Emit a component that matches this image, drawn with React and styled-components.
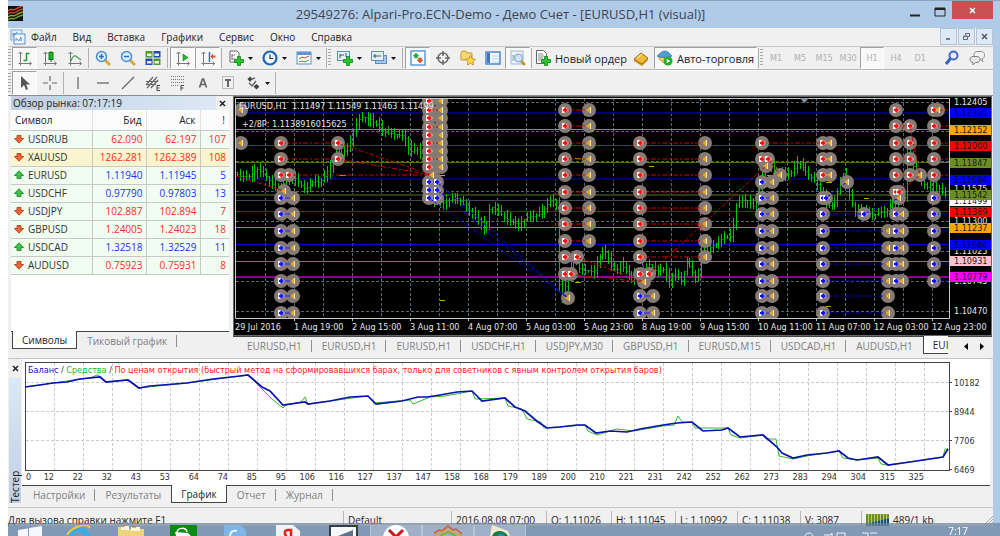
import React from 'react';
import styled, { createGlobalStyle, css } from 'styled-components';

const GlobalStyle = createGlobalStyle`
    * {
        box-sizing: border-box;
    }
    body {
        margin: 0;
        background: #fff;
        font-family: 'Open Sans', 'Noto Sans', sans-serif;
        font-size: 10px;
        color: #222;
        overflow: hidden;
    }
    button {
        font: inherit;
        color: inherit;
        background: none;
        border: 0;
        padding: 0;
        margin: 0;
    }
`

const Window = styled.div`
    margin-left: 8px;
    background: #b0cbe8;
`
const TitleBar = styled.header`
    display: flex;
    height: 28px;
    border-top: 1px solid #8ba3bd;
`
const Logo = styled.svg`
    width: 15px;
    height: 15px;
    margin-top: 5px;
`
const Title = styled.h1`
    flex: 1;
    margin: 0;
    padding-left: 76px;
    text-align: center;
    font-size: 13px;
    line-height: 27px;
    font-weight: 400;
    color: #3c4450;
`
const WindowButtons = styled.div`
    display: flex;
    padding-right: 7px;
    align-items: flex-start;
`
const WindowButton = styled.button`
    width: ${(props) => (props.$close ? '41px' : '25px')};
    height: 18px;
    background: ${(props) => (props.$close ? '#c75050' : 'transparent')};
    svg {
        display: block;
        margin: 0 auto;
    }
`
const Body = styled.div`
    margin-right: 7px;
    background: #f0f0f0;
`
const MenuBar = styled.nav`
    display: flex;
    height: 18px;
    align-items: center;
    padding-left: 2px;
    > svg {
        margin-right: 5px;
    }
`
const MenuItem = styled.button`
    margin-right: 16px;
    font-size: 10px;
    line-height: 18px;
`
const MdiButtons = styled.div`
    display: flex;
    gap: 1px;
    margin-left: auto;
    align-self: flex-start;
`
const MdiButton = styled.button`
    width: 17px;
    height: 17px;
    border: 1px solid #b4c4d6;
    background: #dde9f7;
    svg {
        display: block;
        margin: 0 auto;
    }
`
const Toolbar = styled.div`
    display: flex;
    height: ${(props) => (props.$last ? '26px' : '24px')};
    align-items: stretch;
    padding-right: 4px;
    border-top: 1px solid ${(props) => (props.$last ? '#fbfbfb' : '#c8c8c8')};
    border-bottom: 1px solid ${(props) => (props.$last ? '#8e8e8e' : '#b4b4b4')};
`
const Grip = styled.span`
    width: 3px;
    margin: 2px 1px 2px 0;
    background: repeating-linear-gradient(#a8a8a8 0 1px, #f0f0f0 1px 3px);
`
const Divider = styled.span`
    width: 1px;
    margin: 1px ${(props) => (props.$wide ? '2px' : '1px')};
    background: #b0b0b0;
`
const Tool = styled.button`
    display: flex;
    align-items: center;
    justify-content: center;
    gap: 4px;
    width: ${(props) => (props.$menu ? '34px' : props.$label ? 'auto' : '25px')};
    padding: ${(props) => (props.$label ? '0 2px' : '0')};
    font-size: 11px;
    white-space: nowrap;
    ${(props) => props.$on && css`
        background: #f8f8f8;
        border: 1px solid;
        border-color: #a0a0a0 #fff #fff #a0a0a0;
    `}
`
const Period = styled(Tool)`
    width: 24px;
    font: 9px 'DejaVu Sans Condensed', 'DejaVu Sans', sans-serif;
    color: #b0b0b0;
`
const Push = styled.span`
    flex: 1;
`
const Workspace = styled.main`
    display: grid;
    grid-template-columns: 218px minmax(0, 1fr);
    column-gap: 4px;
    padding: 0 1px 0 3px;
`
const Panel = styled.section`
    display: flex;
    flex-direction: column;
    background: #fff;
`
const PanelTitle = styled.h2`
    display: flex;
    justify-content: space-between;
    margin: 0;
    padding: 1px 3px 0 2px;
    height: 14px;
    font-size: 10px;
    line-height: 13px;
    font-weight: 400;
    background: linear-gradient(90deg, #bfd0e2, #dce8f5 94%, #f0f0f0 94%);
`
const Quotes = styled.table`
    width: 100%;
    border-collapse: collapse;
    table-layout: fixed;
    font-size: 10px;
    line-height: 16px;
    th {
        height: 20px;
        padding: 0 4px;
        font-weight: 400;
        text-align: right;
        border-right: 1px solid #e0e5ea;
        border-bottom: 1px solid #c8c8c8;
        background: #fcfcfc;
    }
    th:first-child {
        text-align: left;
    }
    td {
        height: 18px;
        padding: 0 3px;
        text-align: right;
        border-right: 1px solid #c8c8c8;
        border-bottom: 1px solid #c8c8c8;
    }
    td:last-child, th:last-child {
        border-right: 0;
    }
`
const QuoteRow = styled.tr`
    background: ${(props) => (props.$marked ? '#faf5cf' : '#f0fdf0')};
    color: ${(props) => (props.$up ? '#2330f0' : '#fa2c24')};
`
const Ticker = styled.div`
    display: flex;
    align-items: center;
    gap: 4px;
    color: #333;
`
const TabStrip = styled.div`
    display: flex;
    align-items: flex-start;
    height: ${(props) => (props.$bottom ? '23px' : '18px')};
    margin-top: ${(props) => (props.$bottom ? 'auto' : '0')};
    padding-left: ${(props) => props.$indent || '0'};
    background: #f0f0f0;
    border-top: 1px solid #444;
`
const Tab = styled.button`
    flex: none;
    height: 17px;
    padding: 0 ${(props) => (props.$active ? '9px' : '10px')};
    line-height: 16px;
    font-size: 10px;
    color: ${(props) => (props.$active ? '#222' : '#808080')};
    background: ${(props) => (props.$active ? '#fff' : 'none')};
    border: solid #444;
    border-width: ${(props) => (props.$active ? '0 1px 1px 1px' : '0')};
    ${(props) => props.$active && css`
        height: 18px;
        margin-top: -1px;
    `}
    ${(props) => props.$rule && css`
        background: linear-gradient(#909090, #909090) right center / 1px 12px no-repeat;
    `}
    ${(props) => props.$cut && css`
        padding-right: 0;
        border-right: 0;
    `}
`
const Scroller = styled.div`
    display: flex;
    flex: 1;
    max-width: 34px;
    height: 17px;
    padding-right: 2px;
    margin-left: auto;
    align-items: center;
    justify-content: space-around;
    background: #f0f0f0;
`
const ChartColumn = styled.section`
    min-width: 0;
    svg.plot {
        display: block;
        width: 100%;
        height: auto;
        background: #000;
    }
`
const Tester = styled.section`
    display: grid;
    grid-template-columns: 14px minmax(0, 1fr);
    margin-top: 4px;
    padding-right: 3px;
    border-top: 1px solid #c4c4c4;
    svg.plot {
        display: block;
        width: 100%;
        height: auto;
        background: #fff;
    }
`
const TesterRail = styled.div`
    display: flex;
    flex-direction: column;
    align-items: center;
    justify-content: space-between;
    padding-top: 3px;
    font-size: 10px;
    line-height: 12px;
    span {
        flex: 1;
        width: 12px;
        margin-top: 4px;
        writing-mode: vertical-rl;
        transform: rotate(180deg);
        background: linear-gradient(#bfd0e2, #dce8f5);
    }
`
const StatusBar = styled.footer`
    display: flex;
    height: 29px;
    margin-top: 4px;
    padding-top: 3px;
    border-top: 1px solid #c4c4c4;
    line-height: 18px;
    font-size: 10px;
    white-space: nowrap;
`
const StatusCell = styled.span`
    width: ${(props) => props.$w || 'auto'};
    display: flex;
    align-items: center;
    gap: 4px;
    height: 18px;
    padding-left: ${(props) => (props.$first ? '0' : '4px')};
    border-left: ${(props) => (props.$first ? '0' : '1px solid #b8b8b8')};
    flex: ${(props) => (props.$first ? '1' : 'none')};
    > svg:last-child {
        margin-left: auto;
    }
`
const Taskbar = styled.div`
    position: fixed;
    left: 8px;
    right: 0;
    bottom: 0;
    height: 13px;
    display: flex;
    align-items: flex-end;
    background: linear-gradient(rgba(110, 132, 155, 0.72) 0 3px, #8299b6 3px);
    svg {
        display: block;
    }
`
const TaskButton = styled.button`
    width: ${(props) => props.$w};
    height: 11px;
    display: flex;
    justify-content: center;
    ${(props) => props.$open && css`
        background: rgba(190, 205, 220, 0.45);
        border-left: 1px solid #b6c5d5;
        border-right: 1px solid #b6c5d5;
    `}
`
const Tray = styled.div`
    display: flex;
    align-items: flex-end;
    margin-left: auto;
    padding-right: 32px;
    gap: 70px;
    color: #fff;
    font-size: 10px;
    line-height: 10px;
`

/* ---------- toolbar icons ---------- */

const Icon = ({ children, size = 16 }) => (
    <svg width={size} height={size} viewBox="0 0 16 16" fill="none" aria-hidden="true">{children}</svg>
)
const Axes = () => <path d="M3.500 2v11.500H14M1.500 4l2-2 2 2M12.500 11.500l2 2-2 2M1.500 13.500h2v2" stroke="#777" />
const Caret = () => (
    <svg width="5" height="3" viewBox="0 0 5 3" aria-hidden="true"><path d="M0 0h5L2.500 3z" fill="#111" /></svg>
)
const Plus = () => (
    <path d="M9.500 6.500h3v3h3v3h-3v3h-3v-3h-3v-3h3z" fill="#27c927" stroke="#0b7d12" strokeWidth=".8" />
)
const Cross = ({ color = '#222' }) => (
    <svg width="7" height="7" viewBox="0 0 7 7" aria-hidden="true">
        <path d="M1 1l5 5M6 1L1 6" stroke={color} strokeWidth="1.500" />
    </svg>
)

const icons = {
    bars: <><Axes /><path d="M9.500 3v8M9.500 3.500h3M6.500 10.500h3" stroke="#1d9a2a" strokeWidth="1.500" /></>,
    candles: <><Axes /><path d="M9 1v11" stroke="#0a7a14" /><rect x="7" y="2.500" width="4" height="7" fill="#22b52e" stroke="#0a7a14" /></>,
    line: <><Axes /><path d="M4 11c2-6 4-6 6-4l4 3" stroke="#4c9a55" strokeWidth="1.200" /></>,
    zoomIn: <><path d="M10 10l5 5" stroke="#d9a93a" strokeWidth="3" /><circle cx="6.500" cy="6.500" r="5" fill="#d9efff" stroke="#4b8ed0" strokeWidth="1.500" /><path d="M4 6.500h5M6.500 4v5" stroke="#2a6fb8" strokeWidth="1.500" /></>,
    zoomOut: <><path d="M10 10l5 5" stroke="#d9a93a" strokeWidth="3" /><circle cx="6.500" cy="6.500" r="5" fill="#d9efff" stroke="#4b8ed0" strokeWidth="1.500" /><path d="M4 6.500h5" stroke="#2a6fb8" strokeWidth="1.500" /></>,
    tiles: <><path d="M.5 1h7v6.500h-7zM8.500 8.500h7V15h-7z" fill="#4c9e22" /><path d="M8.500 1h7v6.500h-7zM.5 8.500h7V15h-7z" fill="#2448c0" /><path d="M2 3.500h4.500V6H2zM9.500 3.500H14V6H9.500zM2 11h4.500v2.500H2zM9.500 11H14v2.500H9.500z" fill="#e8f1e4" /></>,
    scroll: <><Axes /><path d="M8 4l5 3.500L8 11z" fill="#25b637" stroke="#10801c" strokeWidth=".6" /></>,
    shift: <><Axes /><path d="M9.500 2v10" stroke="#3c6d9e" strokeWidth="1.500" /><path d="M10.500 6.500l2.500-3v2h2.500v2H13v2z" fill="#d8542a" /></>,
    newChart: <><path d="M2 1h7l2 2v9H2z" fill="#fff" stroke="#666" /><path d="M4 4v6M4 5h3M4 9h3" stroke="#777" /><Plus /></>,
    clock: <><circle cx="8" cy="8" r="6.500" fill="#eef6ff" stroke="#1d65b5" strokeWidth="2.200" /><path d="M8 4.500V8.500h3" stroke="#333" strokeWidth="1.200" /></>,
    template: <><rect x="1" y="2" width="14" height="12" fill="#fff" stroke="#5b8fca" /><path d="M1 2h14v3H1z" fill="#5c94d6" /><path d="M3 9l3-2 3 1 4-2" stroke="#c2422a" /><path d="M3 12l3-1 3 1 4-2" stroke="#35a13c" /></>,
    addPane: <><rect x=".5" y="1.500" width="12" height="9" fill="#e5f0fc" stroke="#5b8fca" /><path d="M3 4v4M3 5h4M9 3v4" stroke="#456" /><Plus /></>,
    panes: <><rect x="4.500" y="5.500" width="11" height="8" fill="#a9c6ea" stroke="#5b8fca" /><rect x=".5" y="1.500" width="12" height="9" fill="#e5f0fc" stroke="#5b8fca" /><path d="M2 6h8M4 4v4" stroke="#456" /></>,
    market: <><rect x="1" y="1" width="14" height="14" fill="#fff" stroke="#5b9bd8" strokeWidth="1.500" /><path d="M6 3l3 3H7.500v2h-3V6H3z" fill="#2fac35" stroke="#2fac35" strokeWidth=".6" /><path d="M10 13l-3-3h1.500V8h3v2H13z" fill="#e2532b" stroke="#e2532b" strokeWidth=".6" /></>,
    target: <><circle cx="8" cy="8" r="5" stroke="#666" strokeWidth="1.500" /><path d="M8 1v5M8 10v5M1 8h5M10 8h5" stroke="#666" strokeWidth="1.500" /></>,
    favorites: <><path d="M1 3l1-2h4l1 2h5v7H1z" fill="#f6d878" stroke="#c79a2c" /><path d="M10.500 5.500l1.500 3.200 3.500.5-2.500 2.300.6 3.500-3.100-1.700-3.100 1.700.6-3.500-2.500-2.300 3.500-.5z" fill="#ffd94d" stroke="#b98614" strokeWidth=".8" /></>,
    data: <><rect x="1" y="2" width="14" height="12" fill="#f2f7fd" stroke="#4c86c9" strokeWidth="1.500" /><path d="M2 3h3v10H2z" fill="#3f78bf" /><path d="M7 6h7M7 9h7M7 12h7" stroke="#c2d4ea" /></>,
    tester: <><rect x="1" y="1" width="12" height="13" fill="#eaf2fb" stroke="#9db6d2" /><path d="M3 11V5l3 3 2-4" stroke="#8aa" /><path d="M11 11l4 4" stroke="#c69522" strokeWidth="2.500" /><circle cx="8.500" cy="8" r="4" fill="#cfe2f5" stroke="#7ba0c8" /></>,
    order: <><path d="M1.500.5h7l3 3v10h-10z" fill="#fff" stroke="#666" /><path d="M3 4h5M3 6h6M3 8h5M3 10h3" stroke="#888" /><Plus /></>,
    book: <><path d="M1 9l7-6 7 5-6 6z" fill="#f0bc3c" stroke="#9d6a13" /><path d="M1 9v2l8 5 6-6V8l-6 6z" fill="#c98a1c" /><path d="M4 8l5-4" stroke="#fff0b5" /></>,
    auto: <><path d="M2 9c0-7 12-7 12 0l-6 5z" fill="#f4cf4e" stroke="#b48c1e" strokeWidth=".7" /><path d="M0 6c2 2 12 2 15 0-2-1-3-5-7-5S3 4 0 6z" fill="#4f9fd0" stroke="#2d74a8" strokeWidth=".7" /><circle cx="11" cy="11" r="4.500" fill="#1faf2d" /><path d="M9.700 8.800l3.600 2.200-3.600 2.200z" fill="#fff" /></>,
    search: <><path d="M6.500 8.500L2 14" stroke="#3c5fc0" strokeWidth="3" /><circle cx="9.500" cy="5.500" r="4" fill="#e6eefc" stroke="#4468c8" strokeWidth="2" /></>,
    chat: <><path d="M8 1.500h4.500c4 0 4 7 .5 7l1 3-4-3H8c-4 0-4-7 0-7z" fill="#f2f2f2" stroke="#8c8c8c" /><path d="M4 6.500h4c4 0 4 6 0 6H6.500L4 15v-2.500c-4 0-4-6 0-6z" fill="#e6e6e6" stroke="#808080" /></>,
    cursor: <path d="M4 1v12l3-3 2 5 2-1-2-4.500h4z" fill="#555" />,
    crosshair: <path d="M8 1v5M8 10v5M1 8h5M10 8h5" stroke="#666" strokeWidth="1.200" />,
    vline: <path d="M8 2v12" stroke="#666" strokeWidth="1.300" />,
    hline: <path d="M2 8h12" stroke="#666" strokeWidth="1.300" />,
    trend: <path d="M2 14L14 2" stroke="#666" strokeWidth="1.200" />,
    channel: <><path d="M1 10L8 2M2 13L12 2M6 13l7-8M1 6.500h12M1 9.500h10" stroke="#666" strokeWidth="1.200" /><path d="M15 10.500h-3v5h3M12 13h2.500" stroke="#444" /></>,
    fibo: <><path d="M1 1.500h14M1 4.500h14M1 7.500h14M1 10.500h8" stroke="#777" strokeDasharray="1 1" /><path d="M14 10.500h-3v5M11 13h2.500" stroke="#444" /></>,
    text: <path d="M4.500 12.500L7.500 4h1l3 8.500M6 9.500h4" stroke="#666" strokeWidth="1.700" />,
    label: <><rect x="2.500" y="1.500" width="11" height="12" stroke="#888" strokeDasharray="1 1" /><path d="M5 5h6M8 5v7" stroke="#666" strokeWidth="2" /></>,
    arrows: <><path d="M5 1.500l2.500 2.500-2.500 3-2.500-3zM11.500 9l3 2.500-3 3-3-3z" fill="#444" /><path d="M4 8l3 3 4-5M7 4l3-1" stroke="#666" strokeWidth="1.500" /></>,
}

const Btn = ({ icon, label, on, menu, text }) => (
    <Tool type="button" aria-label={text ? undefined : label} aria-pressed={on} $on={on} $menu={menu} $label={!!text}>
        <Icon>{icons[icon]}</Icon>
        {text}
        {menu && <Caret />}
    </Tool>
)

/* ---------- market watch ---------- */

const quotes = [
    ['USDRUB', '62.090', '62.197', '107', false],
    ['XAUUSD', '1262.281', '1262.389', '108', false],
    ['EURUSD', '1.11940', '1.11945', '5', true],
    ['USDCHF', '0.97790', '0.97803', '13', true],
    ['USDJPY', '102.887', '102.894', '7', false],
    ['GBPUSD', '1.24005', '1.24023', '18', false],
    ['USDCAD', '1.32518', '1.32529', '11', true],
    ['AUDUSD', '0.75923', '0.75931', '8', false],
]

const Arrow = ({ up }) => (
    <svg width="10" height="10" viewBox="0 0 10 10" aria-hidden="true">
        <path
            d={up ? 'M5 .8l4.600 4.700H7v3H3v-3H.4z' : 'M5 9.200L.4 4.500H3v-3h4v3h2.600z'}
            fill={up ? '#3cc44a' : '#f0653a'}
            stroke={up ? '#157a20' : '#a8320f'}
            strokeWidth=".8"
        />
    </svg>
)

/* ---------- price chart ---------- */

const levels = [
    [17, '#00007c', 2], [33, '#c98200', 1], [49, '#c40000', 1], [66, '#566f1c', 1], [83, '#00006a', 2],
    [99, '#2b3a10', 2], [104, '#454a58', 1], [115, '#a80000', 1], [131, '#c98200', 1], [148, '#0000d0', 1],
    [165, '#8d7077', 1], [181, '#8c008c', 2],
]

const prices = [
    [6, '1.12405'], [93, '1.11575'], [125, '1.11300'], [155, '1.11025'], [185, '1.10745'], [215, '1.10470'],
    [17, '1.12305', '#0000ff', '#00003c'], [34, '1.12152', '#ffa500'], [50, '1.12000', '#ff0000'],
    [67, '1.11847', '#6b8e23'], [84, '1.11694', '#0000ff', '#00003c'], [105, '1.11499', '#ffffff'],
    [99, '1.11542', '#6b8e23'], [116, '1.11389', '#ff0000'], [132, '1.11237', '#ffa500'],
    [149, '1.11084', '#0000ff', '#00003c'], [165, '1.10931', '#ffc0cb'], [181, '1.10779', '#ff00ff'],
]

const times = [
    '1 Aug 19:00', '2 Aug 15:00', '3 Aug 11:00', '4 Aug 07:00', '5 Aug 03:00', '5 Aug 23:00', '8 Aug 19:00',
    '9 Aug 15:00', '10 Aug 11:00', '11 Aug 07:00', '12 Aug 03:00', '12 Aug 23:00',
]

// mid price, one knot for each turn of the market
const knots = [
    [3, 75], [10, 80], [19, 80], [27, 73], [37, 80], [47, 95], [55, 85], [60, 78], [67, 83], [75, 93], [84, 85],
    [90, 86], [97, 76], [104, 61], [109, 48], [114, 55], [119, 53], [122, 38], [129, 23], [134, 20], [140, 23],
    [147, 28], [155, 36], [167, 38], [175, 40], [180, 55], [189, 53], [192, 61], [199, 78], [204, 106], [214, 106],
    [227, 101], [237, 111], [245, 121], [251, 125], [256, 134], [260, 110], [269, 115], [277, 123], [287, 128],
    [297, 121], [310, 118], [319, 106], [326, 101], [328, 120], [330, 211], [334, 195], [339, 178], [344, 163],
    [350, 173], [364, 175], [370, 160], [377, 155], [380, 168], [387, 175], [390, 165], [397, 176], [404, 181],
    [410, 181], [419, 168], [427, 175], [434, 173], [439, 185], [444, 176], [452, 185], [457, 165], [465, 181],
    [470, 178], [472, 141], [480, 151], [485, 148], [494, 141], [501, 140], [503, 135], [505, 111], [510, 105],
    [517, 103], [524, 111], [529, 95], [534, 70], [540, 65], [545, 81], [552, 76], [560, 78], [569, 65],
    [575, 75], [584, 83], [592, 95], [597, 111], [605, 106], [610, 88], [614, 75], [620, 101], [625, 115],
    [634, 115], [644, 118], [657, 115], [664, 105], [675, 101], [678, 35], [681, 65], [687, 78], [697, 91],
    [704, 86], [710, 93], [715, 98],
]

const midAt = (x) => {
    const i = Math.max(1, knots.findIndex(([kx]) => kx >= x))
    const [x0, y0] = knots[i - 1]
    const [x1, y1] = knots[i]
    return y0 + ((y1 - y0) * (x - x0)) / (x1 - x0)
}

const bars = Array.from({ length: 245 }, (_, i) => {
    const x = Math.round(4 + i * 2.9) + 0.5
    const y = Math.round(midAt(x)) + 0.5
    const next = Math.round(midAt(Math.min(x + 3, 715))) + 0.5
    const up = 1 + ((i * i * 7) % 11) * 0.7
    const down = 1 + ((i * i * 5) % 13) * 0.6
    const top = Math.round(Math.min(y, next) - up)
    const bottom = Math.round(Math.max(y, next) + down)
    return `M${x} ${top}V${bottom}M${x - 1} ${y}h1M${x} ${next}h1`
}).join('')

const sellRows = [14, 30, 47, 63, 79, 96, 112, 128, 145]
const buyRows = [102, 118, 135, 152, 168, 185, 200, 217]
const spread = (kind, x, rows) => rows.map((y) => [kind, x, y])

const markers = [
    ...spread('exit', 8, [14, 47]),
    ...spread('sell', 48, [47, 63, 79]), ['sell', 56, 79], ...spread('sell', 105, [47, 63]), ['exit', 51, 95],
    ...spread('buy', 48, buyRows), ...spread('exit', 60, buyRows),
    ...spread('sell', 196, [5, 14, 22, 31, 39, 47, 55, 63, 71]), ...spread('exit', 208, [5, 14, 22, 31, 39, 47, 55, 63, 71]),
    ['exit', 199, 79], ...spread('buy', 196, [86, 94, 102]), ...spread('buy', 204, [86, 94, 102]),
    ...spread('sell', 332, sellRows), ...spread('exit', 356, sellRows),
    ...spread('sell', 332, [161, 178]), ['sell', 344, 161], ['sell', 338, 178], ['exit', 335, 202],
    ...spread('sell', 407, [47, 63, 79, 96, 112, 128, 145, 161, 178]),
    ...spread('exit', 472, [47, 63, 79, 96, 112, 128, 145, 161]), ['sell', 416, 178], ['exit', 411, 186],
    ...spread('buy', 407, [200, 217]), ...spread('exit', 420, [200, 217]),
    ...spread('sell', 529, [47, 63]), ['sell', 535, 63], ['exit', 533, 70], ['exit', 547, 79],
    ...spread('buy', 529, [86, ...buyRows]), ...spread('exit', 539, [86, ...buyRows]),
    ...spread('sell', 590, [47, 63, 79]), ...spread('exit', 597, [47, 63, 79]),
    ...spread('buy', 590, buyRows), ['buy', 593, 102], ['exit', 614, 86], ['buy', 631, 118],
    ...spread('exit', 655, buyRows.slice(2)), ...spread('buy', 663, buyRows.slice(1, 6)),
    ...spread('exit', 669, buyRows.slice(1, 6)),
    ...spread('sell', 663, [14, 30, 47, 63, 79, 96]), ['sell', 666, 96], ...spread('sell', 677, [30, 47, 63, 79]),
    ['exit', 687, 79], ['exit', 666, 102],
    ...spread('sell', 701, [14, 30, 47, 63, 79]), ['exit', 705, 14], ...spread('buy', 701, buyRows.slice(0, 6)),
]

const rowLines = (x1, x2, rows) => rows.map((y) => `M${x1} ${y}H${x2}`).join('')
const sellLines = rowLines(48, 105, [47, 63]) + rowLines(48, 199, [79]) + rowLines(196, 208, [14, 31, 47, 63])
    + rowLines(332, 356, sellRows) + rowLines(407, 472, [47, 63, 79, 96, 112, 128, 145, 161])
    + rowLines(529, 590, [47]) + rowLines(663, 677, [30, 47, 63, 79]) + rowLines(701, 715, [14, 30, 47, 63, 79])
    + 'M3 80L51 95M105 47L199 79M105 63L199 79M344 161L411 186M332 178L411 186M416 178L533 70M535 63L547 79M677 30L687 79M666 96L687 79'
const buyLines = rowLines(590, 631, [118]) + rowLines(590, 655, [135, 152, 168, 185, 200, 217]) + rowLines(701, 715, buyRows.slice(0, 6))
    + 'M204 86L335 202M204 94L335 202M196 102L335 202M593 102L614 86M631 118L666 102'

const Marker = ({ kind, x, y }) => {
    if (kind === 'exit') {
        return (
            <g>
                <path d={`M${x + 1} ${y - 3}h1v6h-1z`} fill="#f2e7d0" />
                <path d={`M${x + 1} ${y - 3}v6l-4-3z`} fill="#e8a820" />
            </g>
        )
    }
    return (
        <g>
            <path d={`M${x - 3} ${y - 3}h3l4 3-4 3h-3z`} fill="#f4efe9" />
            <path d={`M${x - 2} ${y - 1}h1l1-2 3 3-3 3-1-2h-1z`} fill={kind === 'sell' ? '#ff1010' : '#1010ff'} />
        </g>
    )
}

const PriceChart = () => (
    <svg className="plot" viewBox="0 0 759 240" role="img" aria-label="EURUSD,H1" fontFamily="'DejaVu Sans Condensed', 'DejaVu Sans', sans-serif" fontSize="9">
        <rect x=".5" y=".5" width="758" height="239" fill="none" stroke="#666" />
        <clipPath id="plotArea"><path d="M3 2h713v220H3z" /></clipPath>
        <g clipPath="url(#plotArea)">
            <g stroke="#5a6673" strokeDasharray="3 2">
                {Array.from({ length: 24 }, (_, i) => <path key={i} d={`M${32.5 + i * 29} 2V222`} />)}
                {[6, 35, 65, 95, 125, 155, 185, 215].map((y) => <path key={y} d={`M3 ${y + 0.5}H716`} />)}
            </g>
            {levels.map(([y, color, w]) => <path key={y} d={`M3 ${y + (w === 1 ? 0.5 : 0)}H716`} stroke={color} strokeWidth={w} />)}
            <path d={bars} stroke="#00c400" fill="none" />
            <path d="M106 79.500h7M206 79.500h6M207 204.500h5M342 62.500h6M342 186.500h6M416 70.500h5M416 194.500h5M534 79.500h7M593 86.500h6M631 102.500h5M593 210.500h5" stroke="#b5ae00" />
            {markers.map(([kind, x, y], i) => <circle key={i} cx={x} cy={y} r="7" fill="#857b74" />)}
            <path d={sellLines} stroke="#c80000" strokeDasharray="5 2 2 2" fill="none" />
            <path d={buyLines} stroke="#0000c8" strokeDasharray="5 2 2 2" fill="none" />
            <path d={rowLines(48, 60, buyRows) + rowLines(196, 204, [86, 94, 102]) + rowLines(407, 420, [200, 217]) + rowLines(529, 539, buyRows)} stroke="#2020ff" />
            {markers.map(([kind, x, y], i) => <Marker key={i} kind={kind} x={x} y={y} />)}
        </g>
        <path d="M2.500 2V222.500H716.500V2M2.500 2.500H716" stroke="#c8c8c8" fill="none" />
        <path d="M567 2h9l-4.500 5z" fill="#8292a4" />
        <g fill="#e6e6e6">
            <text x="6" y="13">EURUSD,H1&nbsp; 1.11497 1.11549 1.11463 1.11499</text>
            <text x="9" y="31">+2/8P: 1.1138916015625</text>
            <text x="2" y="234">29 Jul 2016</text>
            {times.map((t, i) => (
                <g key={t}>
                    <path d={`M${61.5 + i * 58} 222v3`} stroke="#c8c8c8" />
                    <text x={61 + i * 58} y="234">{t}</text>
                </g>
            ))}
        </g>
        {prices.map(([y, value, bg, ink]) => (
            <g key={value}>
                {bg && <rect x="717" y={y - 5} width="41" height="10" fill={bg} />}
                <text x="721" y={y + 3} fill={bg ? ink || '#1a1a1a' : '#e6e6e6'}>{value}</text>
            </g>
        ))}
    </svg>
)

const chartTabs = [
    'EURUSD,H1', 'EURUSD,H1', 'EURUSD,H1', 'USDCHF,H1', 'USDJPY,M30', 'GBPUSD,H1', 'EURUSD,M15', 'USDCAD,H1', 'AUDUSD,H1',
]

/* ---------- tester graph ---------- */

const balance = '3,28 18,26 31,24 45,23 58,20 78,18 84,23 106,21 117,29 128,27 165,24 191,20 218,17 226,16 240,28 248,32 261,46 283,43 286,45 308,42 328,38 346,37 354,45 380,42 396,38 405,38 418,36 435,33 450,32 460,42 483,39 493,48 503,52 516,63 525,69 538,68 555,66 563,66 574,74 588,72 605,73 618,70 641,66 655,64 670,63 681,72 700,71 706,69 718,78 741,76 755,88 760,94 771,99 785,96 805,94 817,92 826,99 835,101 856,98 866,106 888,103 921,98 926,90'
const equity = '3,28 31,24 58,20 68,19 75,16 79,18 84,23 106,21 116,29 165,24 226,16 240,30 250,40 261,49 264,46 279,43 283,38 286,45 308,42 346,37 352,44 388,41 391,45 408,38 423,37 450,32 453,40 483,39 486,47 500,50 505,60 519,63 522,69 563,66 566,72 575,76 588,72 594,70 612,72 641,67 652,66 656,57 660,63 670,63 673,69 706,69 709,76 718,79 741,76 744,80 754,80 757,97 771,100 785,97 817,92 821,99 835,101 856,99 859,105 866,106 921,98 923,90 926,90'
const trades = [12, 22, 32, 43, 53, 64, 74, 85, 95, 106, 116, 127, 137, 147, 158, 168, 179, 189, 200, 210, 221, 231, 242, 252, 262, 273, 283, 294, 304, 315, 325]

const TesterGraph = () => (
    <svg className="plot" viewBox="0 0 968 126" role="img" aria-label="График" fontFamily="'DejaVu Sans Condensed', 'DejaVu Sans', sans-serif" fontSize="9" fill="#333">
        <g stroke="#ccc" strokeDasharray="3 2">
            {trades.map((t, i) => <path key={t} d={`M${32.5 + i * 29} 4V111`} />)}
            {[23, 52, 81].map((y) => <path key={y} d={`M4 ${y + 0.5}H927`} />)}
        </g>
        <rect x="3.500" y="3.500" width="924" height="108" fill="none" stroke="#444" />
        <text x="6" y="14" fill="#1010c0">
            Баланс <tspan fill="#333">/</tspan> <tspan fill="#20b830">Средства</tspan> <tspan fill="#333">/</tspan>
            <tspan fill="#ff2020"> По ценам открытия (быстрый метод на сформировавшихся барах, только для советников с явным контролем открытия баров)</tspan>
        </text>
        <polyline points={equity} fill="none" stroke="#30b830" />
        <polyline points={balance} fill="none" stroke="#0c10b0" strokeWidth="1.700" />
        <text x="4" y="121">0</text>
        {trades.map((t, i) => <text key={t} x={32 + i * 29} y="121" textAnchor="end">{t}</text>)}
        {[[23, '10182'], [52, '8944'], [81, '7706'], [110, '6469']].map(([y, v]) => (
            <g key={v}>
                <path d={`M927 ${y + 0.5}h3`} stroke="#444" />
                <text x="932" y={y + 4}>{v}</text>
            </g>
        ))}
    </svg>
)

export default function App() {
    return (
        <>
            <GlobalStyle />
            <Window>
                <TitleBar>
                    <Logo viewBox="0 0 15 15" aria-hidden="true">
                        <path d="M0 0h15v15H0z" fill="#15120a" />
                        <g fill="none" strokeWidth="1.500">
                            <path d="M0 5c4-3 5 0 8-2s4-2 7-3" stroke="#d8452c" />
                            <path d="M0 8c4-3 5 0 8-2s4-2 7-3" stroke="#b5452c" />
                            <path d="M0 11c4-3 5 0 8-2s4-2 7-3" stroke="#9a9a22" />
                            <path d="M0 14c4-3 5 0 8-2s4-2 7-3" stroke="#5da32a" />
                        </g>
                    </Logo>
                    <Title>29549276: Alpari-Pro.ECN-Demo - Демо Счет - [EURUSD,H1 (visual)]</Title>
                    <WindowButtons>
                        <WindowButton type="button" aria-label="Свернуть">
                            <svg width="12" height="14" viewBox="0 0 12 14"><path d="M1 12.500h10" stroke="#222" strokeWidth="2" /></svg>
                        </WindowButton>
                        <WindowButton type="button" aria-label="Развернуть">
                            <svg width="12" height="14" viewBox="0 0 12 14"><path d="M1 5h10v8H1z" fill="none" stroke="#222" /><path d="M1 6h10" stroke="#222" strokeWidth="2" /></svg>
                        </WindowButton>
                        <WindowButton type="button" aria-label="Закрыть" $close><Cross color="#fff" /></WindowButton>
                    </WindowButtons>
                </TitleBar>
                <Body>
                    <MenuBar>
                        <Icon>
                            <rect x="1" y="1" width="11" height="10" fill="#e4effb" stroke="#7aa7dd" />
                            <rect x="4" y="5" width="11" height="10" fill="#f3f8fe" stroke="#5b8fca" />
                            <path d="M3 8V4l2 2 2-3M6 12V9l3 3 2-4v4" stroke="#5b8fca" />
                        </Icon>
                        {['Файл', 'Вид', 'Вставка', 'Графики', 'Сервис', 'Окно', 'Справка'].map((m) => (
                            <MenuItem type="button" key={m}>{m}</MenuItem>
                        ))}
                        <MdiButtons>
                            <MdiButton type="button" aria-label="Свернуть график">
                                <svg width="9" height="9" viewBox="0 0 9 9"><path d="M2 7h4" stroke="#556" strokeWidth="1.500" /></svg>
                            </MdiButton>
                            <MdiButton type="button" aria-label="Восстановить график">
                                <svg width="9" height="9" viewBox="0 0 9 9" fill="none" stroke="#667"><path d="M3.500 3V1.500h4v3H6M1.500 4.500h4v3h-4zM1.500 4h4" /></svg>
                            </MdiButton>
                            <MdiButton type="button" aria-label="Закрыть график"><Cross color="#556" /></MdiButton>
                        </MdiButtons>
                    </MenuBar>
                    <Toolbar>
                        <Grip />
                        <Btn icon="bars" label="Бары" on />
                        <Btn icon="candles" label="Японские свечи" />
                        <Btn icon="line" label="Линия" />
                        <Divider />
                        <Btn icon="zoomIn" label="Увеличить" />
                        <Btn icon="zoomOut" label="Уменьшить" />
                        <Btn icon="tiles" label="Окна мозаикой" />
                        <Divider $wide />
                        <Btn icon="scroll" label="Автопрокрутка" on />
                        <Btn icon="shift" label="Сдвиг графика" on />
                        <Divider />
                        <Btn icon="newChart" label="Индикаторы" menu />
                        <Btn icon="clock" label="Периоды" menu />
                        <Btn icon="template" label="Шаблоны" menu />
                        <Divider />
                        <Grip />
                        <Btn icon="addPane" label="Новый график" menu />
                        <Btn icon="panes" label="Профили" menu />
                        <Divider $wide />
                        <Btn icon="market" label="Обзор рынка" on />
                        <Btn icon="target" label="Окно данных" />
                        <Btn icon="favorites" label="Навигатор" />
                        <Btn icon="data" label="Терминал" />
                        <Btn icon="tester" label="Тестер стратегий" on />
                        <Divider />
                        <Btn icon="order" text="Новый ордер" />
                        <Btn icon="book" label="MetaEditor" />
                        <Btn icon="auto" text="Авто-торговля" on />
                        <Divider />
                        <Grip />
                        {['M1', 'M5', 'M15', 'M30', 'H1', 'H4', 'D1'].map((p) => (
                            <Period type="button" key={p} $on={p === 'H1'}>{p}</Period>
                        ))}
                        <Push />
                        <Btn icon="search" label="Поиск" />
                        <Btn icon="chat" label="Сообщество" />
                    </Toolbar>
                    <Toolbar $last>
                        <Grip />
                        <Btn icon="cursor" label="Курсор" on />
                        <Btn icon="crosshair" label="Перекрестие" />
                        <Divider />
                        <Btn icon="vline" label="Вертикальная линия" />
                        <Btn icon="hline" label="Горизонтальная линия" />
                        <Btn icon="trend" label="Трендовая линия" />
                        <Btn icon="channel" label="Канал" />
                        <Btn icon="fibo" label="Фибоначчи" />
                        <Btn icon="text" label="Текст" />
                        <Btn icon="label" label="Метка" />
                        <Btn icon="arrows" label="Стрелки" menu />
                        <Divider />
                    </Toolbar>
                    <Workspace>
                        <Panel>
                            <PanelTitle>
                                Обзор рынка: 07:17:19
                                <button type="button" aria-label="Закрыть панель"><Cross /></button>
                            </PanelTitle>
                            <Quotes>
                                <colgroup>
                                    <col width="81" /><col width="54" /><col width="54" /><col width="29" />
                                </colgroup>
                                <thead>
                                    <tr><th>Символ</th><th>Бид</th><th>Аск</th><th>!</th></tr>
                                </thead>
                                <tbody>
                                    {quotes.map(([symbol, bid, ask, diff, up]) => (
                                        <QuoteRow key={symbol} $up={up} $marked={symbol === 'XAUUSD'}>
                                            <td><Ticker><Arrow up={up} />{symbol}</Ticker></td>
                                            <td>{bid}</td>
                                            <td>{ask}</td>
                                            <td>{diff}</td>
                                        </QuoteRow>
                                    ))}
                                </tbody>
                            </Quotes>
                            <TabStrip $bottom $indent="1px">
                                <Tab type="button" $active>Символы</Tab>
                                <Tab type="button" $rule>Тиковый график</Tab>
                            </TabStrip>
                        </Panel>
                        <ChartColumn>
                            <PriceChart />
                            <TabStrip $indent="4px">
                                {chartTabs.map((t, i) => (
                                    <Tab type="button" key={i} $rule={i < chartTabs.length - 1}>{t}</Tab>
                                ))}
                                <Tab type="button" $active $cut>EUI</Tab>
                                <Scroller>
                                    <button type="button" aria-label="Назад">
                                        <svg width="4" height="7" viewBox="0 0 4 7"><path d="M4 0v7L0 3.500z" /></svg>
                                    </button>
                                    <button type="button" aria-label="Вперед">
                                        <svg width="4" height="7" viewBox="0 0 4 7"><path d="M0 0v7l4-3.500z" /></svg>
                                    </button>
                                </Scroller>
                            </TabStrip>
                        </ChartColumn>
                    </Workspace>
                    <Tester>
                        <TesterRail>
                            <button type="button" aria-label="Закрыть тестер"><Cross /></button>
                            <span>Тестер</span>
                        </TesterRail>
                        <div>
                            <TesterGraph />
                            <TabStrip $indent="1px">
                                <Tab type="button" $rule>Настройки</Tab>
                                <Tab type="button">Результаты</Tab>
                                <Tab type="button" $active>График</Tab>
                                <Tab type="button" $rule>Отчет</Tab>
                                <Tab type="button" $rule>Журнал</Tab>
                            </TabStrip>
                        </div>
                    </Tester>
                    <StatusBar>
                        <StatusCell $first>Для вызова справки нажмите F1</StatusCell>
                        <StatusCell $w="108px">Default</StatusCell>
                        <StatusCell $w="95px">2016.08.08 07:00</StatusCell>
                        <StatusCell $w="65px">O: 1.11026</StatusCell>
                        <StatusCell $w="64px">H: 1.11045</StatusCell>
                        <StatusCell $w="62px">L: 1.10992</StatusCell>
                        <StatusCell $w="63px">C: 1.11038</StatusCell>
                        <StatusCell $w="61px">V: 3087</StatusCell>
                        <StatusCell $w="132px">
                            <svg width="23" height="12" viewBox="0 0 23 12" aria-hidden="true">
                                <path d="M0 0h23v4L0 11z" fill="#6f8f14" />
                                <path d="M0 12v-2L23 4v8z" fill="#12507a" />
                                <path d="M2.500 0v12M5.500 0v12M8.500 0v12M11.500 0v12M14.500 0v12M17.500 0v12M20.500 0v12" stroke="#e6ecd8" strokeWidth=".6" />
                            </svg>
                            489/1 kb
                            <svg width="10" height="14" viewBox="0 0 10 14" aria-hidden="true">
                                <path d="M0 13L10 3M3 13l7-7M6 13l4-4" stroke="#a8a8a8" />
                            </svg>
                        </StatusCell>
                    </StatusBar>
                </Body>
            </Window>
            <Taskbar>
                <TaskButton type="button" aria-label="Пуск" $w="44px">
                    <svg width="24" height="11" viewBox="0 0 24 11"><path d="M0 5l10-1.500V11H0zM11 3l13-2v10H11z" fill="#f4f8fc" /></svg>
                </TaskButton>
                <TaskButton type="button" aria-label="Internet Explorer" $w="54px">
                    <svg width="26" height="11" viewBox="0 0 26 11"><path d="M2 11a11 9 0 0 1 22 0h-6a5 4 0 0 0-10 0z" fill="#3fa9e8" /><path d="M1 10C6 2 20-3 24 3" stroke="#f5c92e" strokeWidth="2" fill="none" /></svg>
                </TaskButton>
                <TaskButton type="button" aria-label="Проводник" $w="50px">
                    <svg width="28" height="11" viewBox="0 0 28 11"><path d="M1 2h9l2 2h15v7H1z" fill="#efd27e" /><path d="M4 1h8v4H4zM14 2h9v4h-9z" fill="#fff6d8" /><path d="M4 1h4M15 2h4" stroke="#d8542a" /></svg>
                </TaskButton>
                <TaskButton type="button" aria-label="Магазин" $w="54px">
                    <svg width="27" height="11" viewBox="0 0 27 11"><path d="M0 0h27v11H0z" fill="#0a8a12" /><path d="M7 8c0-6 9-6 10-1" stroke="#fff" strokeWidth="1.500" fill="none" /><path d="M5 7l13 1 3 3H6z" fill="#fff" /></svg>
                </TaskButton>
                <TaskButton type="button" aria-label="Обновление" $w="50px">
                    <svg width="22" height="11" viewBox="0 0 22 11"><path d="M0 0h16l6 5v6H0z" fill="#7fb6e8" /><path d="M6 11c0-4 3-6 7-5" stroke="#e5f2fd" strokeWidth="2" fill="none" /></svg>
                </TaskButton>
                <TaskButton type="button" aria-label="Яндекс" $w="56px">
                    <svg width="24" height="11" viewBox="0 0 24 11"><path d="M0 0h17l7 6v5H0z" fill="#f2f2f2" /><path d="M15 11V5h-3c-4 0-4 5-1 6" stroke="#e2231a" strokeWidth="2.500" fill="none" /></svg>
                </TaskButton>
                <TaskButton type="button" aria-label="Диспетчер" $w="54px">
                    <svg width="29" height="11" viewBox="0 0 29 11"><path d="M1 1h27v12H1z" fill="#f6f8fa" stroke="#333c48" strokeWidth="2" /><path d="M9 11l15-6v6z" fill="#5f738c" /></svg>
                </TaskButton>
                <TaskButton type="button" aria-label="Терминал X" $w="52px" $open>
                    <svg width="28" height="11" viewBox="0 0 28 11"><circle cx="14" cy="13" r="13" fill="#fff" /><path d="M7 5l9 9M21 5l-9 9" stroke="#d3161c" strokeWidth="3" /></svg>
                </TaskButton>
                <TaskButton type="button" aria-label="MetaTrader" $w="52px" $open>
                    <svg width="28" height="11" viewBox="0 0 28 11" fill="none"><path d="M0 8l5-3 3 1 6-5 5 4 3-1 6 5" stroke="#d8552e" strokeWidth="1.500" /><path d="M0 11l8-4 6-3 6 4 8 3" stroke="#e0a040" strokeWidth="1.500" /><path d="M6 11l8-4 8 4" stroke="#7db33c" strokeWidth="2" /></svg>
                </TaskButton>
                <TaskButton type="button" aria-label="Картинки" $w="52px" $open>
                    <svg width="24" height="11" viewBox="0 0 24 11"><path d="M4 0l16 6 2 5H2z" fill="#f3ead0" /><path d="M4 11c2-6 12-7 16 0z" fill="#1f7a4c" /><path d="M10 11c1-3 5-3 6 0z" fill="#2a8cc4" /></svg>
                </TaskButton>
                <Tray>
                    <svg width="74" height="5" viewBox="0 0 74 5" fill="none" stroke="#eef3f8"><path d="M1 5c1-4 7-4 8 0M20 4h6l2-2v3M33 5V2h8v3M58 2h6v3M66 2h7" /></svg>
                    7:17
                </Tray>
            </Taskbar>
        </>
    );
}
